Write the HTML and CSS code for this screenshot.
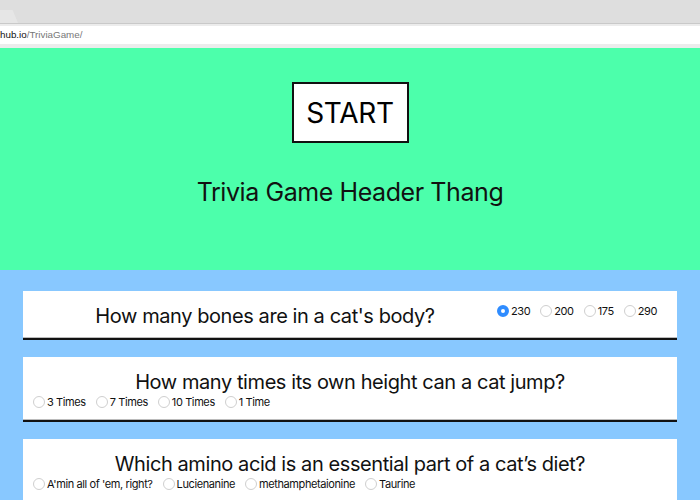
FILE: index.html
```html
<!DOCTYPE html>
<html>
<head>
<meta charset="utf-8">
<link rel="stylesheet" href="styles.css">
</head>
<body>
<div class="chrome">
  <div class="tabbar"><div class="tab"></div></div>
  <div class="addrwrap"><div class="addr"><span class="host">hub.io</span><span class="path">/TriviaGame/</span></div></div>
</div>
<div class="hero">
  <div class="start">START</div>
  <h1 class="title">Trivia Game Header Thang</h1>
</div>
<div class="main">
  <div class="card">
    <h2 class="q">How many bones are in a cat's body?</h2>
    <div class="opts">
      <label class="opt"><span class="radio checked"></span>230</label>
      <label class="opt"><span class="radio"></span>200</label>
      <label class="opt"><span class="radio"></span>175</label>
      <label class="opt"><span class="radio"></span>290</label>
    </div>
  </div>
  <div class="card">
    <h2 class="q">How many times its own height can a cat jump?</h2>
    <div class="opts">
      <label class="opt"><span class="radio"></span>3 Times</label>
      <label class="opt"><span class="radio"></span>7 Times</label>
      <label class="opt"><span class="radio"></span>10 Times</label>
      <label class="opt"><span class="radio"></span>1 Time</label>
    </div>
  </div>
  <div class="card">
    <h2 class="q">Which amino acid is an essential part of a cat’s diet?</h2>
    <div class="opts">
      <label class="opt"><span class="radio"></span>A'min all of 'em, right?</label>
      <label class="opt"><span class="radio"></span>Lucienanine</label>
      <label class="opt"><span class="radio"></span>methamphetaionine</label>
      <label class="opt"><span class="radio"></span>Taurine</label>
    </div>
  </div>
</div>
</body>
</html>
```
FILE: styles.css
```css
html, body {
  margin: 0;
  padding: 0;
}
body {
  width: 700px;
  height: 500px;
  overflow: hidden;
  background: #88c8ff;
  font-family: Inter, "Liberation Sans", sans-serif;
  color: #1d1d1f;
}
.chrome {
  background: #ececec;
}
.tabbar {
  height: 23px;
  background: #dedede;
  border-bottom: 1px solid #c9c9c9;
  display: flex;
  align-items: flex-end;
}
.tab {
  width: 18px;
  height: 13px;
  background: #e6e6e6;
  clip-path: polygon(0 0, 70% 0, 100% 100%, 0 100%);
}
.addrwrap {
  padding: 2px 0 4px;
  background: #ececec;
}
.addr {
  height: 18px;
  background: #fff;
  font-family: "Liberation Sans", Arial, sans-serif;
  font-size: 9.8px;
  line-height: 18px;
  white-space: nowrap;
}
.host { color: #111; }
.path { color: #777; }

.hero {
  background: #4cffab;
  height: 222px;
  padding-top: 34px;
  box-sizing: border-box;
  text-align: center;
}
.start {
  display: inline-flex;
  align-items: center;
  justify-content: center;
  width: 117px;
  height: 61px;
  box-sizing: border-box;
  border: 2px solid #111;
  background: #fff;
  font-size: 28px;
  letter-spacing: -0.3px;
  color: #000;
}
.title {
  margin: 33px 0 0;
  font-size: 25px;
  letter-spacing: -0.42px;
  line-height: 32px;
  font-weight: 400;
  color: #111;
}

.main {
  padding: 21px 23px 0;
}
.card {
  background: #fff;
  border-bottom: 2px solid #111;
  box-shadow: 0 -1px 0 #bbb inset;
  padding: 12px 10px 10px;
  margin-bottom: 17px;
  display: flex;
  flex-wrap: wrap;
  align-items: flex-start;
}
.q {
  flex: 1 1 auto;
  margin: 1px 0 0;
  font-size: 20px;
  letter-spacing: -0.42px;
  line-height: 24px;
  font-weight: 400;
  text-align: center;
  color: #111;
}
.opts {
  display: flex;
  line-height: 16px;
  font-size: 11px;
  letter-spacing: -0.4px;
}
.opt {
  display: inline-flex;
  align-items: center;
  margin-right: 10px;
  color: #111;
  white-space: nowrap;
}
.radio {
  width: 12px;
  height: 12px;
  box-sizing: border-box;
  border-radius: 50%;
  border: 1px solid #cfcfcf;
  background: #fff;
  margin-right: 2px;
}
.radio.checked {
  border: 4px solid #2f8cff;
  background: #fff;
}
```
